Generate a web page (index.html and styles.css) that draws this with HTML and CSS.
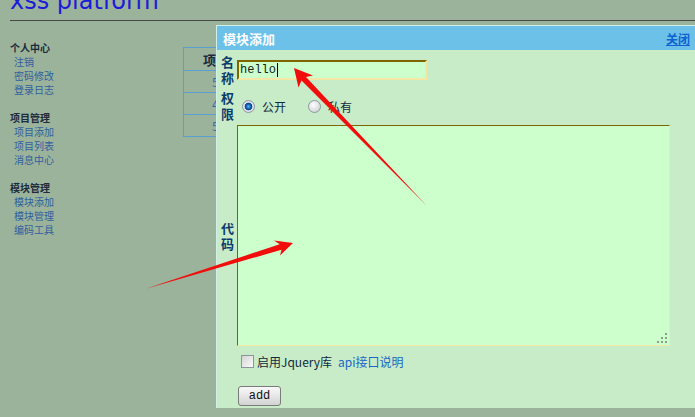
FILE: index.html
```html
<!DOCTYPE html>
<html lang="zh-CN">
<head>
<meta charset="utf-8">
<title>xss platform</title>
<link rel="stylesheet" href="styles.css">
</head>
<body>
<div class="top"><h1 class="logo">xss platform</h1></div>
<div class="layout">
  <nav class="side">
    <div class="group">
      <div class="gh">个人中心</div>
      <a class="nav">注销</a>
      <a class="nav">密码修改</a>
      <a class="nav">登录日志</a>
    </div>
    <div class="group">
      <div class="gh">项目管理</div>
      <a class="nav">项目添加</a>
      <a class="nav">项目列表</a>
      <a class="nav">消息中心</a>
    </div>
    <div class="group">
      <div class="gh">模块管理</div>
      <a class="nav">模块添加</a>
      <a class="nav">模块管理</a>
      <a class="nav">编码工具</a>
    </div>
  </nav>
  <main class="content">
    <table class="list">
      <tr><th>项</th></tr>
      <tr><td>5</td></tr>
      <tr><td>4</td></tr>
      <tr><td>5</td></tr>
    </table>
  </main>
</div>

<div class="modal">
  <div class="modal-head">
    <span class="modal-title">模块添加</span>
    <a class="close">关闭</a>
  </div>
  <div class="modal-body">
    <div class="row row-name">
      <span class="lbl"><span class="ch">名</span><span class="ch">称</span></span>
      <div class="input">hello<span class="caret"></span></div>
    </div>
    <div class="row row-perm">
      <span class="lbl"><span class="ch">权</span><span class="ch">限</span></span>
      <input class="radio" type="radio" name="p" checked><span class="rtext">公开</span>
      <input class="radio" type="radio" name="p"><span class="rtext">私有</span>
    </div>
    <div class="row row-code">
      <span class="lbl"><span class="ch">代</span><span class="ch">码</span></span>
      <div class="code-wrap">
        <textarea class="code"></textarea>
        <svg class="grip" width="12" height="12" viewBox="0 0 12 12">
          <rect x="9" y="1" width="2" height="2"/>
          <rect x="5" y="5" width="2" height="2"/><rect x="9" y="5" width="2" height="2"/>
          <rect x="1" y="9" width="2" height="2"/><rect x="5" y="9" width="2" height="2"/><rect x="9" y="9" width="2" height="2"/>
        </svg>
      </div>
    </div>
    <div class="opts">
      <input class="check" type="checkbox"><span class="otext">启用Jquery库</span><a class="api">api接口说明</a>
    </div>
    <div class="actions"><button class="btn" type="button">add</button></div>
  </div>
</div>

<svg class="arrows" width="695" height="417" viewBox="0 0 695 417">
  <polygon points="294,68 313,75.5 306,77 427,206 301.5,80.5 298.5,87.5"/>
  <polygon points="293,243 274,240.5 279.7,244.2 145,289 281.5,249.8 280,255.5"/>
</svg>
</body>
</html>
```

FILE: styles.css
```css
html, body {
  margin: 0;
  padding: 0;
}
body {
  background: #9bb39b;
  font-family: "Noto Sans CJK SC", "Liberation Sans", sans-serif;
  height: 417px;
  overflow: hidden;
  position: relative;
}

.top {
  margin-left: 10px;
  height: 20px;
  border-bottom: 1px solid #474747;
  overflow: hidden;
}
.logo {
  margin: -11px 0 0;
  font: normal 24px/24px "DejaVu Sans", sans-serif;
  color: #1c1cd8;
}

.layout {
  display: flex;
  padding: 20px 0 0 10px;
}
.side {
  width: 173px;
  flex: none;
  font-size: 10px;
  line-height: 14px;
}
.group {
  margin-bottom: 14px;
}
.gh {
  font-weight: bold;
  color: #1b2b3b;
}
.nav {
  display: block;
  padding-left: 4px;
  color: #2f5f9f;
}

.list {
  margin-top: 6px;
  border-collapse: collapse;
}
.list th, .list td {
  border: 1px solid #5a9fd2;
  width: 91px;
  padding: 0;
  text-align: left;
}
.list th {
  height: 22px;
  padding-left: 19px;
  font-size: 13px;
  color: #1b2b3b;
}
.list td {
  height: 21px;
  padding-left: 28px;
  font-size: 12px;
  color: #3a68a8;
}

.modal {
  position: absolute;
  left: 216px;
  top: 25px;
  right: 0;
  bottom: 9px;
  background: #c8ebc8;
  border: 1px solid #d2f0ea;
  border-right: 0;
  border-bottom: 0;
}
.modal-head {
  height: 24px;
  background: #6cc1e9;
  display: flex;
  align-items: center;
  justify-content: space-between;
  padding: 0 5px 0 6px;
}
.modal-title {
  color: #ffffff;
  font-weight: bold;
  font-size: 13px;
}
.close {
  color: #0f62cf;
  font-weight: bold;
  font-size: 12px;
  text-decoration: underline;
}

.modal-body {
  padding: 5px 0 0 4px;
}
.row {
  display: flex;
  align-items: center;
}
.lbl {
  width: 16px;
  flex: none;
  display: flex;
  flex-direction: column;
  gap: 2px;
  font-weight: bold;
  font-size: 13px;
  line-height: 14px;
  color: #0d3c6c;
}
.ch {
  display: block;
  height: 14px;
}
.row-perm {
  margin-top: 6px;
}
.row-code {
  margin-top: 4px;
}

.input {
  width: 190px;
  height: 20px;
  box-sizing: border-box;
  border: 2px solid;
  border-color: #7f6500 #f5e7a5 #f5e7a5 #7f6500;
  background: #ccffcc;
  font: 12px/16px "Liberation Mono", monospace;
  padding-left: 1px;
  color: #122222;
  display: flex;
  align-items: center;
}
.caret {
  display: inline-block;
  width: 1px;
  height: 14px;
  background: #000;
  margin-left: 1px;
}

.radio {
  appearance: none;
  -webkit-appearance: none;
  width: 13px;
  height: 13px;
  box-sizing: border-box;
  border-radius: 50%;
  border: 1px solid #8d98a2;
  background: radial-gradient(circle at 40% 35%, #ffffff 0, #e6e6e6 45%, #c2c6ca 100%);
  margin: 0 7px 0 5px;
}
.radio:checked {
  background: radial-gradient(circle at 50% 50%, #5cb8ee 0, #1c6cc0 2px, #0b3f86 3.5px, #e4e8ec 4.2px, #c4c8cc 100%);
}
.rtext {
  font-size: 12px;
  color: #102a40;
  margin-right: 17px;
}

.code-wrap {
  position: relative;
  width: 433px;
  height: 221px;
}
.code {
  display: block;
  width: 433px;
  height: 221px;
  box-sizing: border-box;
  margin: 0;
  border: 1px solid;
  border-color: #7f6500 #f5e7a5 #f5e7a5 #7f6500;
  background: #ccffcc;
  resize: none;
  outline: none;
}
.grip {
  position: absolute;
  right: 2px;
  bottom: 2px;
  fill: #8f9f8f;
}

.opts {
  margin-top: 8px;
  padding-left: 20px;
  height: 14px;
  display: flex;
  align-items: center;
  font-size: 12px;
}
.check {
  appearance: none;
  -webkit-appearance: none;
  width: 13px;
  height: 13px;
  box-sizing: border-box;
  margin: 0 3px 0 0;
  border: 1px solid #8c959e;
  background: linear-gradient(135deg, #d4d4d4, #fbfbfb);
}
.otext {
  color: #102a40;
}
.api {
  margin-left: 6px;
  color: #1a66c4;
}

.actions {
  display: flex;
  margin-top: 18px;
  padding-left: 17px;
}
.btn {
  width: 43px;
  height: 20px;
  padding: 0;
  border: 1px solid #7a7a7a;
  border-radius: 3px;
  background: linear-gradient(#f8f8f8, #e6e6e6 50%, #d2d2d2);
  font: 12px/18px "Liberation Mono", monospace;
  color: #111;
}

.arrows {
  position: absolute;
  left: 0;
  top: 0;
  pointer-events: none;
  fill: #f20d0d;
}
```
